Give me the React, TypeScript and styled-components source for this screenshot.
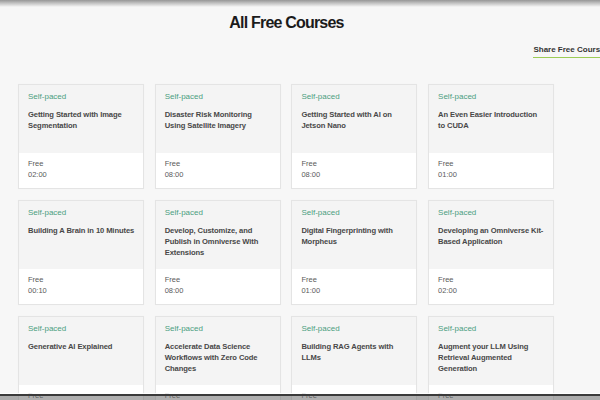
import React from 'react';
import styled, { createGlobalStyle } from 'styled-components';

interface Course {
  title: string;
  price: string;
  duration: string;
}

const courses: Course[] = [
  { title: 'Getting Started with Image Segmentation', price: 'Free', duration: '02:00' },
  { title: 'Disaster Risk Monitoring Using Satellite Imagery', price: 'Free', duration: '08:00' },
  { title: 'Getting Started with AI on Jetson Nano', price: 'Free', duration: '08:00' },
  { title: 'An Even Easier Introduction to CUDA', price: 'Free', duration: '01:00' },
  { title: 'Building A Brain in 10 Minutes', price: 'Free', duration: '00:10' },
  { title: 'Develop, Customize, and Publish in Omniverse With Extensions', price: 'Free', duration: '08:00' },
  { title: 'Digital Fingerprinting with Morpheus', price: 'Free', duration: '01:00' },
  { title: 'Developing an Omniverse Kit-Based Application', price: 'Free', duration: '02:00' },
  { title: 'Generative AI Explained', price: 'Free', duration: '02:00' },
  { title: 'Accelerate Data Science Workflows with Zero Code Changes', price: 'Free', duration: '01:00' },
  { title: 'Building RAG Agents with LLMs', price: 'Free', duration: '08:00' },
  { title: 'Augment your LLM Using Retrieval Augmented Generation', price: 'Free', duration: '01:00' },
];

const App = (): JSX.Element => {
  return (
    <>
      <GlobalStyle />
      <TopShade />
      <Page>
        <Title>All Free Courses</Title>
        <ShareRow>
          <ShareLink href="#">Share Free Courses</ShareLink>
        </ShareRow>
        <Grid>
          {courses.map((course) => (
            <Card key={course.title}>
              <CardTop>
                <Pace>Self-paced</Pace>
                <CourseTitle>{course.title}</CourseTitle>
              </CardTop>
              <CardBottom>
                <Meta>{course.price}</Meta>
                <Meta>{course.duration}</Meta>
              </CardBottom>
            </Card>
          ))}
        </Grid>
      </Page>
      <BottomEdge />
    </>
  );
};

export default App;

const GlobalStyle = createGlobalStyle`
  html, body {
    margin: 0;
    padding: 0;
    overflow: hidden;
    height: 400px;
    background: #f7f7f7;
    font-family: "Liberation Sans", Arial, sans-serif;
  }
`;

const TopShade = styled.div`
  position: fixed;
  top: 0;
  left: 0;
  right: 0;
  height: 7px;
  background: linear-gradient(rgba(140, 140, 140, 0.9), rgba(247, 247, 247, 0));
  z-index: 2;
`;

const BottomEdge = styled.div`
  position: fixed;
  left: 0;
  right: 0;
  bottom: 0;
  height: 4px;
  border-top: 2px solid #3a3a3a;
  box-shadow: 0 -1px 0 rgba(255, 255, 255, 0.8);
  background: rgba(110, 110, 110, 0.55);
  z-index: 2;
`;

const Page = styled.div`
  width: 591px;
  padding: 13px 0 0 18px;
`;

const Title = styled.h1`
  width: 537px;
  margin: 0;
  text-align: center;
  font-size: 16px;
  line-height: 20px;
  letter-spacing: -0.8px;
  font-weight: bold;
  color: #1b1b1b;
`;

const ShareRow = styled.div`
  display: flex;
  justify-content: flex-end;
  margin-top: 12px;
  height: 39px;
`;

const ShareLink = styled.a`
  font-size: 8px;
  line-height: 10px;
  height: 12px;
  font-weight: bold;
  color: #333;
  text-decoration: none;
  white-space: nowrap;
  border-bottom: 1px solid #9ccc55;
`;

const Grid = styled.div`
  display: grid;
  grid-template-columns: repeat(4, 126px);
  grid-auto-rows: 105px;
  column-gap: 10.7px;
  row-gap: 11px;
`;

const Card = styled.div`
  display: flex;
  flex-direction: column;
  border: 1px solid #e4e4e4;
  box-shadow: 0 0 1px rgba(0, 0, 0, 0.04);
  background: #ffffff;
  box-sizing: border-box;
  overflow: hidden;
`;

const CardTop = styled.div`
  height: 68px;
  flex-shrink: 0;
  background: #f4f4f4;
  padding: 6px 8px 0 9px;
  box-sizing: border-box;
`;

const Pace = styled.div`
  font-size: 8px;
  line-height: 11px;
  color: #4b9e80;
`;

const CourseTitle = styled.div`
  margin-top: 6.5px;
  font-size: 7.6px;
  line-height: 11.3px;
  letter-spacing: -0.1px;
  font-weight: bold;
  color: #484848;
`;

const CardBottom = styled.div`
  flex: 1;
  background: #ffffff;
  padding: 5px 9px 0;
`;

const Meta = styled.div`
  font-size: 7.5px;
  line-height: 11px;
  color: #5a5a5a;
`;
